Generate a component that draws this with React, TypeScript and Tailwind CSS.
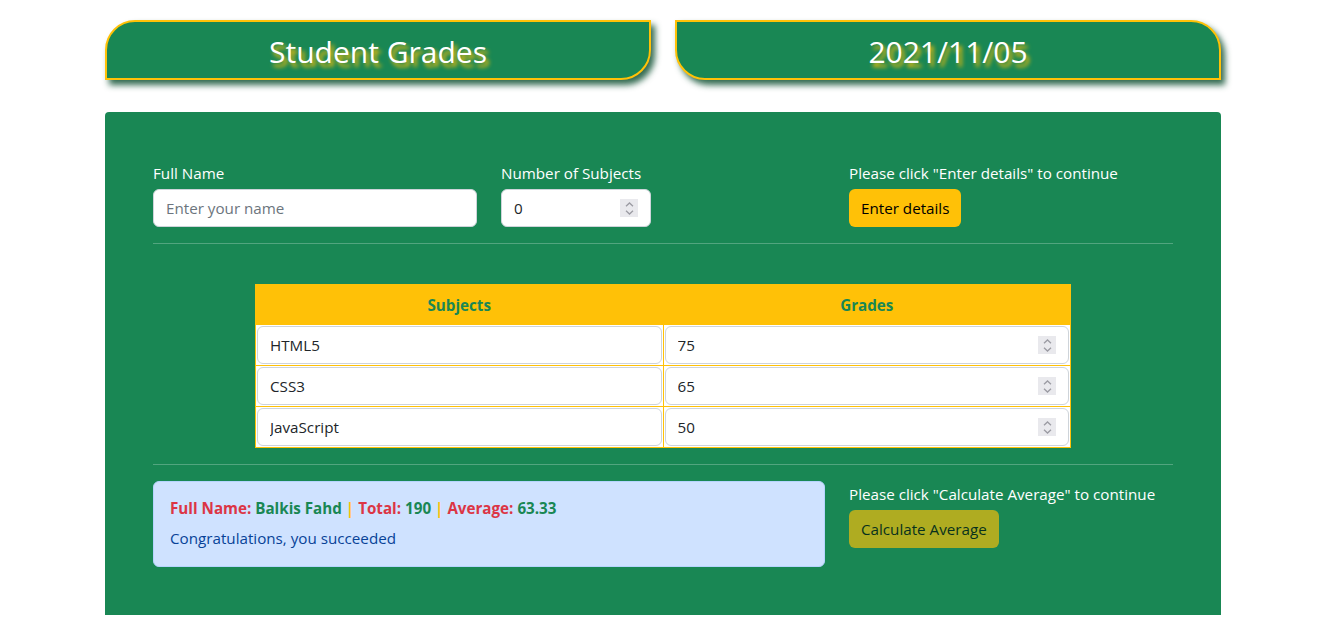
import React from "react";

const subjects = [
  { name: "HTML5", grade: 75 },
  { name: "CSS3", grade: 65 },
  { name: "JavaScript", grade: 50 },
];

function Spinner() {
  return (
    <div className="pointer-events-none absolute right-[13px] top-1/2 flex h-[18px] w-[18px] -translate-y-1/2 flex-col items-center justify-center gap-[3px] bg-[#e9e9ed]">
      <svg width="9" height="5" viewBox="0 0 9 5" fill="none">
        <path d="M1 4.2 L4.5 1 L8 4.2" stroke="#9b9ba3" strokeWidth="1.3" />
      </svg>
      <svg width="9" height="5" viewBox="0 0 9 5" fill="none">
        <path d="M1 0.8 L4.5 4 L8 0.8" stroke="#9b9ba3" strokeWidth="1.3" />
      </svg>
    </div>
  );
}

function NumberInput({ value }: { value: number }) {
  return (
    <div className="relative">
      <input
        type="number"
        defaultValue={value}
        className="block h-[38px] w-full rounded-md border border-[#ced4da] bg-white px-3 text-[#212529] outline-none [appearance:textfield] [&::-webkit-inner-spin-button]:appearance-none [&::-webkit-outer-spin-button]:appearance-none"
      />
      <Spinner />
    </div>
  );
}

export default function App() {
  return (
    <div className="min-h-screen bg-white font-['Open_Sans',sans-serif] text-[15.2px] leading-6 text-[#212529]">
      <div className="ml-[105px] w-[1116px]">
        <div className="grid grid-cols-2 gap-6 pt-5">
          <div className="flex h-[60px] items-center justify-center rounded-tl-[30px] rounded-br-[30px] border-2 border-[#ffc107] bg-[#198754] pt-1 shadow-[4px_5px_6px_rgba(15,81,50,0.85)]">
            <h1 className="text-[30px] leading-[38px] text-white [text-shadow:3px_4px_4px_#ffc107]">Student Grades</h1>
          </div>
          <div className="flex h-[60px] items-center justify-center rounded-tr-[30px] rounded-bl-[30px] border-2 border-[#ffc107] bg-[#198754] pt-1 shadow-[4px_5px_6px_rgba(15,81,50,0.85)]">
            <h2 className="text-[30px] leading-[38px] text-white [text-shadow:3px_4px_4px_#ffc107]">2021/11/05</h2>
          </div>
        </div>

        <div className="mt-8 rounded-t bg-[#198754] px-12 pt-[49px] pb-12">
          <div className="grid grid-cols-12 gap-x-6">
            <div className="col-span-4">
              <label className="mb-1 block text-white">Full Name</label>
              <input
                type="text"
                placeholder="Enter your name"
                className="block h-[38px] w-full rounded-md border border-[#ced4da] bg-white px-3 text-[#212529] placeholder:text-[#6c757d] outline-none"
              />
            </div>
            <div className="col-span-2">
              <label className="mb-1 block text-white">Number of Subjects</label>
              <NumberInput value={0} />
            </div>
            <div className="col-span-4 col-start-9">
              <p className="mb-1 text-white">Please click "Enter details" to continue</p>
              <button className="h-[38px] rounded-md bg-[#ffc107] px-3 text-black">Enter details</button>
            </div>
          </div>

          <hr className="my-4 border-t border-white/25" />

          <table className="mx-auto mt-10 w-[816px] border-collapse border border-[#ffc107]">
            <thead>
              <tr className="bg-[#ffc107]">
                <th className="h-10 w-1/2 border border-[#ffc107] font-bold text-[#198754]">Subjects</th>
                <th className="h-10 w-1/2 border border-[#ffc107] font-bold text-[#198754]">Grades</th>
              </tr>
            </thead>
            <tbody>
              {subjects.map((s) => (
                <tr key={s.name}>
                  <td className="border border-[#ffc107] bg-white p-px">
                    <input
                      type="text"
                      readOnly
                      value={s.name}
                      className="block h-[38px] w-full rounded-md border border-[#ced4da] bg-white px-3 text-[#212529] outline-none"
                    />
                  </td>
                  <td className="border border-[#ffc107] bg-white p-px">
                    <NumberInput value={s.grade} />
                  </td>
                </tr>
              ))}
            </tbody>
          </table>

          <hr className="my-4 border-t border-white/25" />

          <div className="grid grid-cols-12 gap-x-6">
            <div className="col-span-8 rounded-md border border-[#b6d4fe] bg-[#cfe2ff] px-4 pt-[14px] pb-4 text-[#084298]">
              <p className="mb-1.5 font-bold">
                <span className="text-[#dc3545]">Full Name: </span>
                <span className="text-[#198754]">Balkis Fahd</span>
                <span className="text-[#ffc107]"> | </span>
                <span className="text-[#dc3545]">Total: </span>
                <span className="text-[#198754]">190</span>
                <span className="text-[#ffc107]"> | </span>
                <span className="text-[#dc3545]">Average: </span>
                <span className="text-[#198754]">63.33</span>
              </p>
              <p>Congratulations, you succeeded</p>
            </div>
            <div className="col-span-4 pt-px">
              <p className="mb-1 text-white">Please click "Calculate Average" to continue</p>
              <button disabled className="h-[38px] rounded-md bg-[#ffc107] px-3 text-black opacity-65">Calculate Average</button>
            </div>
          </div>
        </div>
      </div>
    </div>
  );
}
